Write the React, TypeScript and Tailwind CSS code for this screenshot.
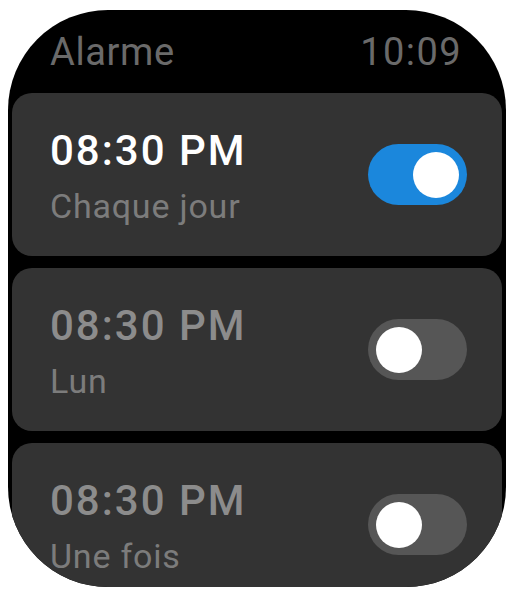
import React from "react";

type Alarm = {
    time: string;
    label: string;
    on: boolean;
};

const ALARMS: Alarm[] = [
    {time: "08:30 PM", label: "Chaque jour", on: true},
    {time: "08:30 PM", label: "Lun", on: false},
    {time: "08:30 PM", label: "Une fois", on: false},
];

function Toggle({on}: {on: boolean}) {
    return (
        <div
            className={
                "w-[99px] h-[61px] rounded-full flex items-center px-[8px] shrink-0 " +
                (on ? "bg-[#1b87dc] justify-end" : "bg-[#565656] justify-start")
            }
        >
            <div className="w-[46px] h-[46px] rounded-full bg-white"/>
        </div>
    );
}

export default function App() {
    return (
        <div className="w-[509px] h-[590px] bg-white pt-[10px] pl-[8px] font-['Roboto',sans-serif]">
            <div className="w-[498px] h-[577px] bg-black rounded-[100px] overflow-hidden flex flex-col">
                {/* header */}
                <div className="h-[83px] shrink-0 flex items-start justify-between pl-[42px] pr-[44px] pt-[20px]">
                    <span className="text-[38px] leading-[44px] tracking-[0.6px] text-[#6a6a6a]">Alarme</span>
                    <span className="text-[38px] leading-[44px] tracking-[1.4px] text-[#6a6a6a]">10:09</span>
                </div>

                <div className="flex flex-col gap-[12px] px-[4px]">
                    {ALARMS.map((alarm, i) => (
                        <div
                            key={i}
                            className="h-[163px] shrink-0 bg-[#333333] rounded-[20px] flex items-center justify-between pl-[38px] pr-[35px]"
                        >
                            <div className="flex flex-col pt-[2px]">
                                <span
                                    className={
                                        "text-[42px] leading-[50px] tracking-[2px] font-medium " +
                                        (alarm.on ? "text-white" : "text-[#8c8c8c]")
                                    }
                                >
                                    {alarm.time}
                                </span>
                                <span className="text-[34px] leading-[40px] tracking-[0.8px] text-[#7c7c7c] mt-[10px]">
                                    {alarm.label}
                                </span>
                            </div>
                            <Toggle on={alarm.on}/>
                        </div>
                    ))}
                </div>
            </div>
        </div>
    );
}
